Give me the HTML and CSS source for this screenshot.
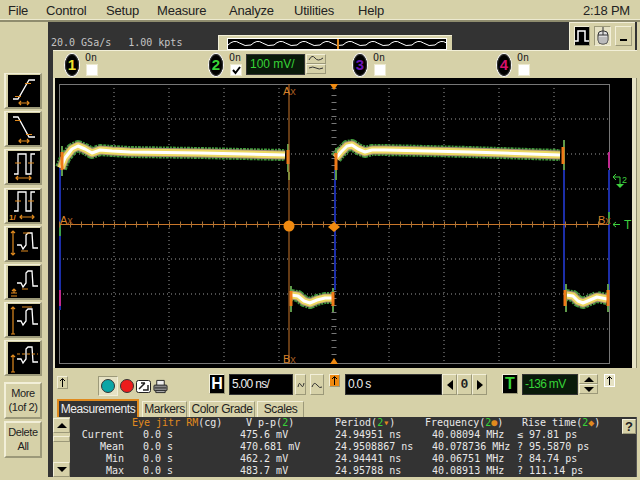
FILE: index.html
```html
<!DOCTYPE html>
<html lang="en">
<head>
  <meta charset="UTF-8" />
  <title>Infiniium</title>
  <link rel="stylesheet" href="styles.css">
</head>
<body>
  <div class="menu">
    <span>File</span><span>Control</span><span>Setup</span><span>Measure</span><span>Analyze</span><span>Utilities</span><span>Help</span>
    <span class="clock">2:18 PM</span>
  </div>

  <div class="app">
    <div class="side">
      <div class="mode"><svg viewBox="0 0 32 32"><path class="wh" d="M5 24H10L21 5H27"/><path class="or" d="M7 21.500H13M17 8.500H23M11 28H21M13 26L11 28L13 30M19 26L21 28L19 30"/></svg></div>
      <div class="mode"><svg viewBox="0 0 32 32"><path class="wh" d="M5 4H10L21 24H27"/><path class="or" d="M7 7.500H13M18 21.500H24M11 28H21M13 26L11 28L13 30M19 26L21 28L19 30"/></svg></div>
      <div class="mode"><svg viewBox="0 0 32 32"><path class="wh" d="M6 23H10V3H18V23H23V3H27"/><path class="or" d="M7 12H13M20 12H26M8 27H23M10 25L8 27L10 29M21 25L23 27L21 29"/></svg></div>
      <div class="mode"><svg viewBox="0 0 32 32"><path class="wh" d="M6 21H10V2H18V21H23V2H27"/><path class="or" d="M7 11H13M20 11H26M12 27H26M14 25L12 27L14 29M24 25L26 27L24 29"/><text class="tiny" x="1" y="30">1/</text></svg></div>
      <div class="mode"><svg viewBox="0 0 32 32"><path class="wh" d="M9 17H13L15 21L18 17V7L20 5H24L25 20H30"/><path class="or" d="M5 3V27M3 5L5 3L7 5M3 25L5 27L7 25M15 5H22M13 23H20"/></svg></div>
      <div class="mode"><svg viewBox="0 0 32 32"><path class="wh" d="M9 17H13L15 21L18 17V7L20 5H24L25 20H30"/><path class="or" d="M14 23H20M3 27H9M6 23V27M4 25L6 23L8 25M3 30H9"/></svg></div>
      <div class="mode"><svg viewBox="0 0 32 32"><path class="wh" d="M9 17H13L15 21L18 17V7L20 5H24L25 20H30"/><path class="or" d="M5 3V30M3 5L5 3L7 5M3 30H7M14 3H24"/></svg></div>
      <div class="mode"><svg viewBox="0 0 32 32"><path class="wh" d="M9 17H13L15 21L18 17V7L20 5H24L25 20H30"/><path class="or" d="M5 13V30M3 15L5 13L7 15M3 30H7"/><path class="or dash" d="M9 12H30"/></svg></div>
      <div class="side-btn first">More<br>(1of 2)</div>
      <div class="side-btn">Delete<br>All</div>
    </div>

    <div class="main">
      <div class="acq-row">
        <div class="rate"><span>20.0 GSa/s</span><span>1.00 kpts</span></div>
        <div class="nav">
          <svg width="218" height="10" viewBox="0 0 218 10">
            <defs>
              <pattern id="sine" width="23" height="10" patternUnits="userSpaceOnUse">
                <path d="M0 6Q6 0 11.500 4T23 6" fill="none" stroke="#fff"/>
              </pattern>
            </defs>
            <rect width="218" height="10" fill="url(#sine)"/>
            <rect x="109" width="2" height="10" fill="#e08a1e"/>
          </svg>
        </div>
        <div class="tools">
          <div class="tool dark"><svg width="14" height="14" viewBox="0 0 14 14"><path d="M0 12H3V2H10V12H14" fill="none" stroke="#fff" stroke-width="1.500"/></svg></div>
          <div class="tool pressed"><svg width="12" height="18" viewBox="0 0 12 18"><path d="M6 4V0" stroke="#333" fill="none"/><rect x="1" y="4" width="10" height="13" rx="4" fill="#ddd" stroke="#333"/><path d="M1 8H11M6 4V8" stroke="#333"/><path d="M2 10V16M4 10V17M6 10V17M8 10V17M10 10V16" stroke="#999"/></svg></div>
          <div class="tool"><span class="minimize"></span></div>
        </div>
      </div>

      <div class="chan-row">
        <div class="chan">
          <span class="badge c1">1</span>
          <div class="chan-on"><span class="mono">On</span><span class="check"></span></div>
        </div>
        <div class="chan">
          <span class="badge c2">2</span>
          <div class="chan-on"><span class="mono">On</span><span class="check"><svg width="9" height="9" viewBox="0 0 9 9"><path d="M1 4L3.500 7L8 1" fill="none" stroke="#000" stroke-width="2"/></svg></span></div>
          <span class="scale">100 mV/</span>
          <div class="scale-btns">
            <span class="mini"><svg width="16" height="8" viewBox="0 0 16 8"><path d="M1 5Q4 -1 7 3T15 3" fill="none" stroke="#333"/></svg></span>
            <span class="mini"><svg width="16" height="8" viewBox="0 0 16 8"><path d="M1 3Q5 1 8 3T15 3" fill="none" stroke="#333"/></svg></span>
          </div>
        </div>
        <div class="chan">
          <span class="badge c3">3</span>
          <div class="chan-on"><span class="mono">On</span><span class="check"></span></div>
        </div>
        <div class="chan">
          <span class="badge c4">4</span>
          <div class="chan-on"><span class="mono">On</span><span class="check"></span></div>
        </div>
      </div>

      <div class="screen">
        <svg width="577" height="290" viewBox="55 78 577 290">
          <rect x="55" y="78" width="577" height="290" fill="#000"/>
          <path class="grid" d="M114 84V364M169 84V364M224 84V364M279 84V364M389 84V364M444 84V364M499 84V364M554 84V364"/>
          <path class="grid" d="M59 119H609M59 154H609M59 189H609M59 259H609M59 294H609M59 329H609"/>
          <path class="axis-v" d="M334 88V360"/>
          <rect class="frame" x="59.500" y="84.500" width="550" height="279"/>

          <path class="edge" d="M60 165V310M335 170V290M564 165V290M609 170V290"/>
          <path class="edge-m" d="M60 290V306M609 152V168M564 156V168"/>
          <path class="edge-g" d="M60 224V236M609 212V224M289 172V180"/>

          <defs>
            <path id="w1" d="M61 168L65 158L72 149L78 146L85 149L92 153L100 150L112 151L130 152L200 153L285 155"/>
            <path id="w2" d="M336 158L341 152L347 146L352 145L358 149L365 152L372 150L385 150L470 152L560 155"/>
            <path id="w3" d="M291 295L298 296L304 301L310 303L317 300L325 298L333 298"/>
            <path id="w4" d="M566 295L573 296L578 301L583 303L590 300L597 297L607 299"/>
          </defs>
          <g class="trace">
            <use class="t-green" href="#w1"/><use class="t-green" href="#w2"/><use class="t-green" href="#w3"/><use class="t-green" href="#w4"/>
            <use class="t-mauve" href="#w1"/><use class="t-mauve" href="#w2"/><use class="t-mauve" href="#w3"/><use class="t-mauve" href="#w4"/>
            <use class="t-yellow" href="#w1"/><use class="t-yellow" href="#w2"/><use class="t-yellow" href="#w3"/><use class="t-yellow" href="#w4"/>
            <use class="t-white" href="#w1"/><use class="t-white" href="#w2"/><use class="t-white" href="#w3"/><use class="t-white" href="#w4"/>
          </g>
          <path class="spike-g" d="M62 146V176M288 144V172M336 148V180M564 140V170M291 286V312M333 288V312M566 284V312M608 284V312"/>
          <path class="spike" d="M62 152V170M288 150V164M336 153V170M563 147V164M291 291V306M333 292V306M565 290V306M608 290V306"/>

          <path class="cursor" d="M289 84V364M59 224.500H609"/>
          <path class="cursor-ticks" d="M59 224.500H609"/>
          <circle cx="289" cy="226" r="5.500" fill="#f08a10"/>
          <path d="M334 222L340 227L334 232L328 227Z" fill="#f08a10"/>
          <path d="M330 84H338L334 90Z" fill="#f08a10"/>
          <path d="M330 364H338L334 358Z" fill="#f08a10"/>

          <text class="mark" x="283" y="95">A<tspan fill="#a05a20">x</tspan></text>
          <text class="mark" x="283" y="363">B<tspan fill="#a05a20">x</tspan></text>
          <text class="mark" x="60" y="224">A<tspan fill="#a05a20">x</tspan></text>
          <text class="mark" x="598" y="224">B<tspan fill="#a05a20">x</tspan></text>

          <path class="trig" d="M613 177H620V185M613 177L616 174M613 177L616 180"/>
          <path d="M616 184H624L620 188Z" fill="#3fd23f"/>
          <text class="trig-text" x="622" y="183">2</text>
          <path class="trig" d="M613 224.500H620M613 224.500L616 222M613 224.500L616 227"/>
          <text class="trig-t" x="624" y="229">T</text>
        </svg>
      </div>

      <div class="ctrl-row">
        <span class="tiny-btn up-left"><svg width="7" height="9" viewBox="0 0 7 9"><path d="M3.500 9V1M1 3L3.500 .5L6 3" fill="none" stroke="#000"/></svg></span>
        <div class="run">
          <span class="run-btn pressed"><i class="dot teal"></i></span>
          <span class="run-btn"><i class="dot red"></i></span>
          <span class="run-btn"><svg width="15" height="13" viewBox="0 0 15 13"><rect x=".5" y=".5" width="14" height="12" rx="2" fill="#fff" stroke="#222"/><path d="M3 9L9 3M9 3H5M12 5V10H7" fill="none" stroke="#222" stroke-width="1.500"/></svg></span>
          <span class="run-btn"><svg width="16" height="15" viewBox="0 0 16 15"><path d="M4 6V1H12V6" fill="#eee" stroke="#222"/><rect x="1" y="6" width="14" height="6" rx="1" fill="#888" stroke="#222"/><path d="M3 12H13V14H3Z" fill="#ccc" stroke="#222"/><path d="M2 9H14" stroke="#222"/></svg></span>
        </div>
        <span class="letter white">H</span>
        <span class="readout timebase">5.00 ns/</span>
        <span class="mini-tall"><svg width="8" height="10" viewBox="0 0 8 10"><path d="M1 7Q2 1 4 5T7 3" fill="none" stroke="#333"/></svg></span>
        <span class="mini-tall wide"><svg width="12" height="8" viewBox="0 0 12 8"><path d="M1 6Q3 0 6 4T11 6" fill="none" stroke="#333"/></svg></span>
        <span class="tiny-btn orange"><svg width="7" height="9" viewBox="0 0 7 9"><path d="M3.500 9V1M1 3L3.500 .5L6 3" fill="none" stroke="#000"/></svg></span>
        <span class="readout delay">0.0 s</span>
        <span class="step"><i class="tri-left"></i></span>
        <span class="step bold">0</span>
        <span class="step"><i class="tri-right"></i></span>
        <span class="letter green">T</span>
        <span class="readout level">-136 mV</span>
        <div class="updown">
          <span><i class="tri-up"></i></span>
          <span><i class="tri-down"></i></span>
        </div>
        <span class="tiny-btn up-right"><svg width="7" height="9" viewBox="0 0 7 9"><path d="M3.500 9V1M1 3L3.500 .5L6 3" fill="none" stroke="#000"/></svg></span>
      </div>

      <div class="tabs">
        <span class="tab active">Measurements</span>
        <span class="tab markers">Markers</span>
        <span class="tab grade">Color Grade</span>
        <span class="tab scales">Scales</span>
      </div>

      <div class="meas">
        <div class="scroll">
          <span class="scroll-btn"><i class="tri-up"></i></span>
          <span class="thumb"></span>
          <span class="track"></span>
          <span class="scroll-btn"><i class="tri-down"></i></span>
        </div>
        <table>
          <tbody>
            <tr>
              <td></td>
              <td><span class="org">Eye jitr RM</span>(cg)</td>
              <td class="in-6">V p-p(<span class="grn">2</span>)</td>
              <td>Period(<span class="grn">2</span><span class="org">▾</span>)</td>
              <td>Frequency(<span class="grn">2</span><span class="org">●</span>)</td>
              <td class="in-5">Rise time(<span class="grn">2</span><span class="org">◆</span>)</td>
            </tr>
            <tr><td class="lbl">Current</td><td class="in-11">0.0 s</td><td>475.6 mV</td><td>24.94951 ns</td><td class="in-7">40.08094 MHz</td><td>≤ 97.81 ps</td></tr>
            <tr><td class="lbl">Mean</td><td class="in-11">0.0 s</td><td>470.681 mV</td><td>24.9508867 ns</td><td class="in-7">40.078736 MHz</td><td>? 95.5870 ps</td></tr>
            <tr><td class="lbl">Min</td><td class="in-11">0.0 s</td><td>462.2 mV</td><td>24.94441 ns</td><td class="in-7">40.06751 MHz</td><td>? 84.74 ps</td></tr>
            <tr><td class="lbl">Max</td><td class="in-11">0.0 s</td><td>483.7 mV</td><td>24.95788 ns</td><td class="in-7">40.08913 MHz</td><td>? 111.14 ps</td></tr>
          </tbody>
        </table>
        <span class="help">?</span>
      </div>
    </div>
  </div>
</body>
</html>
```

FILE: styles.css
```css
body {
  margin: 0;
  width: 640px;
  height: 480px;
  overflow: hidden;
  background-color: #d6d1a8;
  font-family: "Liberation Sans", Arial, sans-serif;
  font-size: 12px;
  color: #222;
}
svg {
  display: block;
}

/* menu */
.menu {
  display: grid;
  grid-template-columns: 38px 60px 51px 72px 65px 64px 1fr auto;
  height: 20px;
  padding-left: 8px;
  padding-right: 10px;
  align-items: center;
  font-size: 13px;
  letter-spacing: -0.200px;
  border-bottom: 2px solid #8f8c6e;
  box-shadow: inset 0 -1px 0 #ece9cf;
}

.app {
  display: flex;
  height: 458px;
}

/* left column */
.side {
  width: 48px;
  box-sizing: border-box;
  padding: 51px 6px 0 4px;
  display: flex;
  flex-direction: column;
  gap: 2.200px;
  flex-shrink: 0;
}
.mode, .side-btn, .tool, .mini, .mini-tall, .tiny-btn, .step, .run-btn, .updown span, .scroll-btn, .thumb, .help, .letter {
  box-sizing: border-box;
  background-color: #d6d1a8;
  border: 1px solid;
  border-color: #f2efd8 #9c9979 #9c9979 #f2efd8;
}
.mode {
  width: 38px;
  height: 36px;
  padding: 1px 2px;
  border-width: 1px 2px 2px 2px;
}
.mode svg {
  background-color: #000;
  width: 32px;
  height: 32px;
}
.wh {
  fill: none;
  stroke: #fff;
  stroke-width: 1.300;
}
.or {
  fill: none;
  stroke: #e08a1e;
  stroke-width: 1.200;
}
.dash {
  stroke-dasharray: 3 2;
}
.tiny {
  font-size: 8px;
  font-weight: bold;
  fill: #e08a1e;
}
.side-btn {
  width: 38px;
  height: 37px;
  display: flex;
  align-items: center;
  justify-content: center;
  text-align: center;
  white-space: nowrap;
  line-height: 14px;
  font-size: 11px;
  letter-spacing: -0.400px;
  border-width: 2px;
}
.side-btn.first {
  margin-top: 3px;
}

/* main frame */
.main {
  width: 589px;
  height: 455px;
  background-color: #333;
  flex-shrink: 0;
  display: flex;
  flex-direction: column;
}
.acq-row {
  display: flex;
  height: 28px;
  flex-shrink: 0;
}
.rate {
  width: 170px;
  box-sizing: border-box;
  padding: 15px 0 0 3px;
  display: flex;
  gap: 17px;
  font-family: "DejaVu Sans Mono", monospace;
  font-size: 10px;
  line-height: 12px;
  color: #c4c4c4;
}
.nav {
  width: 234px;
  height: 15px;
  margin-top: 13px;
  box-sizing: border-box;
  padding: 3px 8px 0 9px;
  background-color: #d6d1a8;
  border-top: 1px solid #f2efd8;
  border-left: 1px solid #f2efd8;
}
.nav svg {
  background-color: #000;
  outline: 1px solid #fff;
}
.tools {
  width: 66px;
  margin-left: 117px;
  box-sizing: border-box;
  padding: 3px 3px 3px 4px;
  display: flex;
  gap: 4px;
  background-color: #d6d1a8;
  border-top: 1px solid #f2efd8;
  border-left: 1px solid #f2efd8;
}
.tool {
  width: 18px;
  height: 20px;
  display: flex;
  align-items: center;
  justify-content: center;
}
.tool.dark {
  width: 16px;
  background-color: #000;
}
.pressed {
  background-color: #e6e2c4;
  border-color: #9c9979 #f2efd8 #f2efd8 #9c9979;
}
.minimize {
  width: 7px;
  height: 2px;
  margin-top: 7px;
  background-color: #000;
}

/* channels */
.chan-row {
  display: grid;
  grid-template-columns: repeat(4, 144px);
  height: 28px;
  margin-left: 5px;
  padding-left: 11px;
  flex-shrink: 0;
  background-color: #d6d1a8;
  border-top: 1px solid #f2efd8;
  box-sizing: border-box;
}
.chan {
  display: flex;
  align-items: flex-start;
}
.badge {
  width: 16px;
  height: 24px;
  margin-top: 2px;
  box-sizing: border-box;
  border-radius: 50%;
  background-color: #000;
  border: 1px solid #fff;
  outline: 1px solid #333;
  outline-offset: -2px;
  text-align: center;
  font-size: 15px;
  font-weight: bold;
  line-height: 22px;
}
.c1 { color: #efe22e; }
.c2 { color: #37d437; }
.c3 { color: #6a16b4; }
.c4 { color: #d6106a; }
.chan-on {
  display: flex;
  flex-direction: column;
  margin-left: 5px;
  padding-top: 1px;
  width: 15px;
}
.mono {
  font-family: "DejaVu Sans Mono", monospace;
  font-size: 10px;
  line-height: 12px;
}
.check {
  width: 12px;
  height: 12px;
  margin-left: 1px;
  box-sizing: border-box;
  padding: 1px;
  background-color: #fff;
  border: 1px solid #ece9cf;
}
.scale {
  width: 59px;
  height: 21px;
  margin: 3px 0 0 2px;
  padding-left: 3px;
  box-sizing: border-box;
  background-color: #0a1a0a;
  border: 1px solid #333;
  color: #37d437;
  line-height: 19px;
}
.scale-btns {
  display: flex;
  flex-direction: column;
  margin-top: 3px;
  margin-left: 1px;
}
.mini {
  width: 20px;
  height: 10px;
  display: flex;
  align-items: center;
  justify-content: center;
}

/* scope */
.screen {
  height: 290px;
  margin-left: 5px;
  padding-left: 2px;
  flex-shrink: 0;
  background-color: #e6e2c4;
  border-right: 1px solid #8f8c6e;
}
.grid {
  fill: none;
  stroke: #9a9a9a;
  stroke-dasharray: 1 3;
}
.axis-v {
  fill: none;
  stroke: #777;
  stroke-width: 5;
  stroke-dasharray: 1 6;
}
.frame {
  fill: none;
  stroke: #777;
}
.edge {
  fill: none;
  stroke: #1c2ea8;
  stroke-width: 2;
}
.edge-m {
  fill: none;
  stroke: #c02a90;
  stroke-width: 2;
}
.edge-g {
  fill: none;
  stroke: #3da04a;
  stroke-width: 2;
}
.trace use {
  fill: none;
  stroke-linejoin: round;
}
.t-green {
  stroke: #3f9a3a;
  stroke-width: 12;
  stroke-dasharray: 3 1 2 1;
}
.t-mauve {
  stroke: #a08a78;
  stroke-width: 9;
}
.t-yellow {
  stroke: #ecd860;
  stroke-width: 7;
}
.t-white {
  stroke: #fff;
  stroke-width: 3;
}
.spike-g {
  fill: none;
  stroke: #5f9a4a;
  stroke-width: 2;
}
.spike {
  fill: none;
  stroke: #ef7a18;
  stroke-width: 3;
}
.cursor {
  fill: none;
  stroke: #c9762a;
}
.cursor-ticks {
  fill: none;
  stroke: #a8743a;
  stroke-width: 6;
  stroke-dasharray: 1 10;
}
.mark {
  font-family: "Liberation Sans", sans-serif;
  font-size: 11px;
  fill: #d8822a;
}
.trig {
  fill: none;
  stroke: #3fd23f;
}
.trig-text {
  font-family: "Liberation Sans", sans-serif;
  font-size: 9px;
  fill: #3fd23f;
}
.trig-t {
  font-family: "Liberation Sans", sans-serif;
  font-size: 12px;
  fill: #3fd23f;
}

/* control row */
.ctrl-row {
  display: flex;
  height: 32px;
  margin-left: 5px;
  padding-top: 6px;
  box-sizing: border-box;
  flex-shrink: 0;
  background-color: #d6d1a8;
  align-items: flex-start;
}
.tiny-btn {
  width: 11px;
  height: 13px;
  display: flex;
  align-items: center;
  justify-content: center;
}
.up-left {
  margin-left: 4px;
  margin-top: 2px;
}
.run {
  display: flex;
  margin-left: 30px;
  margin-top: 2px;
}
.run-btn {
  width: 17px;
  height: 20px;
  display: flex;
  align-items: center;
  justify-content: center;
  border-color: transparent;
  background-color: transparent;
}
.run-btn.pressed {
  width: 20px;
  background-color: #e6e2c4;
  border-color: #9c9979 #f2efd8 #f2efd8 #9c9979;
}
.dot {
  width: 12px;
  height: 12px;
  border-radius: 50%;
  border: 1px solid #333;
}
.teal { background-color: #0aa6a6; }
.red { background-color: #ec1c1c; }
.letter {
  width: 16px;
  height: 20px;
  background-color: #000;
  text-align: center;
  font-size: 16px;
  font-weight: bold;
  line-height: 18px;
}
.letter.white {
  margin-left: 40px;
  color: #fff;
}
.letter.green {
  margin-left: 15px;
  color: #37d437;
}
.readout {
  height: 21px;
  box-sizing: border-box;
  padding-left: 2px;
  background-color: #000;
  border: 1px solid #333;
  color: #eee;
  line-height: 18px;
  letter-spacing: -0.700px;
}
.timebase {
  width: 64px;
  margin-left: 4px;
}
.delay {
  width: 97px;
  margin-left: 5px;
}
.level {
  width: 56px;
  margin-left: 4px;
  color: #37d437;
  background-color: #0a1a0a;
}
.mini-tall {
  width: 11px;
  height: 21px;
  margin-left: 2px;
  display: flex;
  align-items: center;
  justify-content: center;
}
.mini-tall.wide {
  width: 14px;
  margin-left: 4px;
}
.orange {
  margin-left: 5px;
  background-color: #f08a10;
}
.step {
  width: 15px;
  height: 21px;
  display: flex;
  align-items: center;
  justify-content: center;
}
.step.bold {
  font-weight: bold;
  font-family: "Liberation Mono", monospace;
  font-size: 13px;
}
.tri-left, .tri-right, .tri-up, .tri-down {
  width: 0;
  height: 0;
  display: block;
}
.tri-left {
  border: 5px solid transparent;
  border-left: 0;
  border-right: 6px solid #000;
}
.tri-right {
  border: 5px solid transparent;
  border-right: 0;
  border-left: 6px solid #000;
}
.tri-up {
  border: 5px solid transparent;
  border-top: 0;
  border-bottom: 5px solid #000;
}
.tri-down {
  border: 5px solid transparent;
  border-bottom: 0;
  border-top: 5px solid #000;
}
.updown {
  display: flex;
  flex-direction: column;
  margin-left: 1px;
}
.updown span {
  width: 19px;
  height: 10px;
  display: flex;
  align-items: center;
  justify-content: center;
}
.up-right {
  margin-left: 6px;
  background-color: #e6e2c4;
  border-color: #fff;
}

/* tabs */
.tabs {
  display: flex;
  height: 17px;
  margin-left: 5px;
  padding-left: 4px;
  flex-shrink: 0;
  background-color: #d6d1a8;
  align-items: flex-end;
}
.tab {
  height: 16px;
  box-sizing: border-box;
  text-align: center;
  white-space: nowrap;
  letter-spacing: -0.400px;
  line-height: 15px;
  border: 1px solid;
  border-color: #f2efd8 #9c9979 transparent #f2efd8;
  border-bottom: 0;
}
.tab.active {
  width: 82px;
  height: 19px;
  margin-bottom: -1px;
  background-color: #333;
  color: #eee;
  border: 2px solid #e08a1e;
  border-bottom: 0;
  line-height: 17px;
}
.markers {
  width: 45px;
  margin-left: 3px;
}
.grade {
  width: 66px;
  margin-left: 2px;
}
.scales {
  width: 47px;
  margin-left: 2px;
}

/* measurements */
.meas {
  display: flex;
  height: 60px;
  margin-left: 5px;
  position: relative;
  flex-shrink: 0;
  background-color: #333;
  border-right: 1px solid #555;
}
.scroll {
  width: 17px;
  display: flex;
  flex-direction: column;
  background-color: #d6d1a8;
}
.scroll-btn {
  height: 15px;
  margin-top: 1px;
  display: flex;
  align-items: center;
  justify-content: center;
}
.thumb {
  height: 6px;
  margin-top: 3px;
}
.track {
  flex: 1;
}
table {
  border-collapse: collapse;
  table-layout: fixed;
  width: 552px;
  height: 60px;
  font-family: "DejaVu Sans Mono", monospace;
  font-size: 10px;
  color: #e8e8e8;
}
td {
  padding: 0;
  height: 12px;
  box-sizing: border-box;
  line-height: 12px;
  white-space: pre;
}
td:nth-child(1) { width: 62px; }
td:nth-child(2) { width: 108px; }
td:nth-child(3) { width: 95px; }
td:nth-child(4) { width: 90px; }
td:nth-child(5) { width: 92px; }
.lbl {
  padding-right: 8px;
  text-align: right;
}
.in-5 { padding-left: 5px; }
.in-6 { padding-left: 6px; }
.in-7 { padding-left: 7px; }
.in-11 { padding-left: 11px; }
.org { color: #e08a1e; }
.grn { color: #37d437; }
.help {
  position: absolute;
  right: 0;
  top: 2px;
  width: 14px;
  height: 15px;
  text-align: center;
  font-weight: bold;
  font-size: 13px;
  line-height: 13px;
}
```
